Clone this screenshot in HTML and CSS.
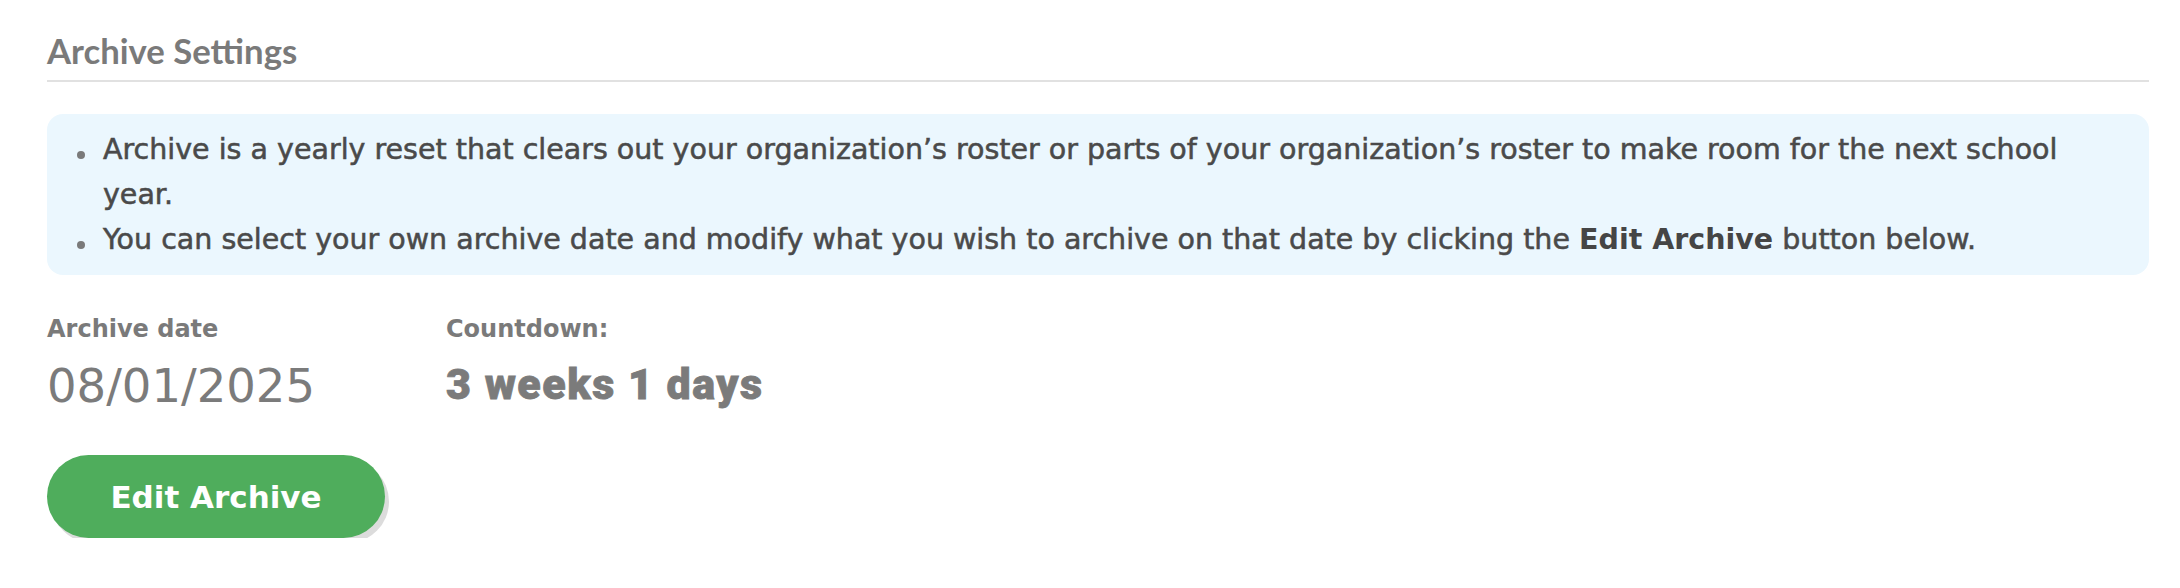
FILE: index.html
```html
<!DOCTYPE html>
<html lang="en">
<head>
<meta charset="utf-8">
<title>Archive Settings</title>
<link rel="stylesheet" href="styles.css">
</head>
<body>
<section class="settings">
  <h2 class="settings-title">Archive Settings</h2>
  <div class="info-box">
    <ul class="info-list">
      <li>Archive is a yearly reset that clears out your organization’s roster or parts of your organization’s roster to make room for the next school year.</li>
      <li>You can select your own archive date and modify what you wish to archive on that date by clicking the <strong>Edit Archive</strong> button below.</li>
    </ul>
  </div>
  <div class="stats">
    <div class="stat">
      <div class="stat-label">Archive date</div>
      <div class="stat-value">08/01/2025</div>
    </div>
    <div class="stat">
      <div class="stat-label">Countdown:</div>
      <div class="stat-value stat-value-bold">3 weeks 1 days</div>
    </div>
  </div>
  <button class="edit-btn" type="button">Edit Archive</button>
</section>
</body>
</html>
```

FILE: styles.css
```css
* { box-sizing: border-box; }
html, body { margin: 0; padding: 0; background: #ffffff; }
body {
  font-family: "DejaVu Sans", Roboto, sans-serif;
}
.settings {
  padding: 0 31px 0 47px;
}
.settings-title {
  margin: 0;
  padding: 31px 0 9px;
  font-family: Lato, "Liberation Sans", Arial, sans-serif;
  font-weight: 700;
  font-size: 34.7px;
  line-height: 40px;
  color: #7a7a7a;
  border-bottom: 2px solid #e1e1e1;
}
.info-box {
  margin-top: 32px;
  background: #ebf7fe;
  border-radius: 16px;
  padding: 13px 40px 13px 0;
}
.info-list {
  list-style: none;
  margin: 0;
  padding: 0;
}
.info-list li {
  position: relative;
  padding-left: 56px;
  font-family: "DejaVu Sans", Roboto, sans-serif;
  font-size: 28.5px;
  font-weight: 400;
  line-height: 45px;
  color: #4a4a4a;
  -webkit-text-stroke: 0.55px #4a4a4a;
}
.info-list li::before {
  content: "";
  position: absolute;
  left: 30px;
  top: 24px;
  width: 8px;
  height: 8px;
  border-radius: 50%;
  background: #7a7a7a;
}
.info-list strong { font-weight: 700; color: #454545; -webkit-text-stroke: 0; }
.stats {
  display: grid;
  grid-template-columns: 399px auto;
  margin-top: 39px;
}
.stat-label {
  font-family: "DejaVu Sans", Roboto, sans-serif;
  font-size: 24px;
  font-weight: 700;
  line-height: 30px;
  color: #7a7a7a;
}
.stat-value {
  margin-top: 15px;
  font-family: "DejaVu Sans", Roboto, sans-serif;
  font-size: 46.5px;
  font-weight: 400;
  line-height: 54px;
  color: #7b7b7b;
}
.stat-value-bold {
  margin-top: 13px;
  font-family: Roboto, "DejaVu Sans", sans-serif;
  font-size: 43px;
  font-weight: 900;
  letter-spacing: 1.5px;
  -webkit-text-stroke: 0.8px #7b7b7b;
}
.edit-btn {
  display: block;
  margin-top: 42px;
  width: 338px;
  height: 83px;
  padding: 0;
  border: none;
  border-radius: 42px;
  background: #4fad5c;
  color: #ffffff;
  font-family: "DejaVu Sans", Roboto, sans-serif;
  font-weight: 700;
  font-size: 31px;
  box-shadow: 4px 5px 0 #dcdcdc;
  cursor: pointer;
}
```
